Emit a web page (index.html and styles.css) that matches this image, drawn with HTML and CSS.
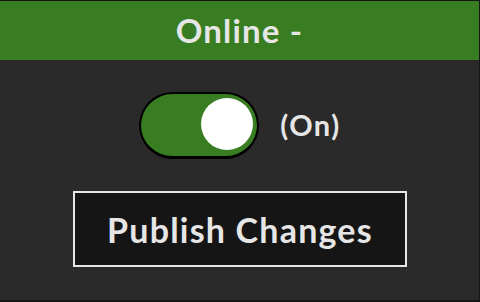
FILE: index.html
```html
<!DOCTYPE html>
<html>
<head>
<meta charset="utf-8">
<link rel="stylesheet" href="styles.css">
</head>
<body>
<div class="panel">
  <header class="header">Online -</header>
  <main class="content">
    <div class="toggle-row">
      <div class="toggle"><span class="knob"></span></div>
      <span class="state">(On)</span>
    </div>
    <button class="publish">Publish Changes</button>
  </main>
</div>
</body>
</html>
```
FILE: styles.css
```css
html, body {
  margin: 0;
  padding: 0;
  background: #161616;
}
body {
  width: 480px;
  height: 302px;
  overflow: hidden;
  font-family: "Lato", "Noto Sans", sans-serif;
  color: #e6e6e6;
}
.panel {
  margin-top: 1px;
  width: 479px;
  height: 299px;
  background: #2a2a2a;
  display: flex;
  flex-direction: column;
}
.header {
  height: 59px;
  background: #387d22;
  display: flex;
  align-items: center;
  justify-content: center;
  font-size: 33px;
  font-weight: 700;
  letter-spacing: 1.2px;
  padding-bottom: 2px;
  box-sizing: border-box;
}
.content {
  flex: 1;
  display: flex;
  flex-direction: column;
  align-items: center;
}
.toggle-row {
  margin-top: 32px;
  display: flex;
  align-items: center;
  gap: 21px;
  margin-left: 1px;
}
.toggle {
  box-sizing: border-box;
  width: 120px;
  height: 67px;
  border: 2px solid #000;
  border-bottom-width: 3px;
  border-radius: 34px;
  background: #387d22;
  display: flex;
  justify-content: flex-end;
  padding: 4px;
}
.knob {
  width: 52px;
  height: 52px;
  border-radius: 50%;
  background: #fff;
}
.state {
  font-size: 29px;
  font-weight: 700;
  letter-spacing: 1.5px;
  margin-bottom: 2px;
}
.publish {
  margin-top: 32px;
  box-sizing: border-box;
  width: 334px;
  height: 76px;
  background: #151515;
  border: 2px solid #e6e6e6;
  color: #e6e6e6;
  font-family: "Lato", "Noto Sans", sans-serif;
  font-size: 34px;
  font-weight: 700;
  letter-spacing: 1.2px;
  padding: 0;
  margin-left: 1px;
}
```
